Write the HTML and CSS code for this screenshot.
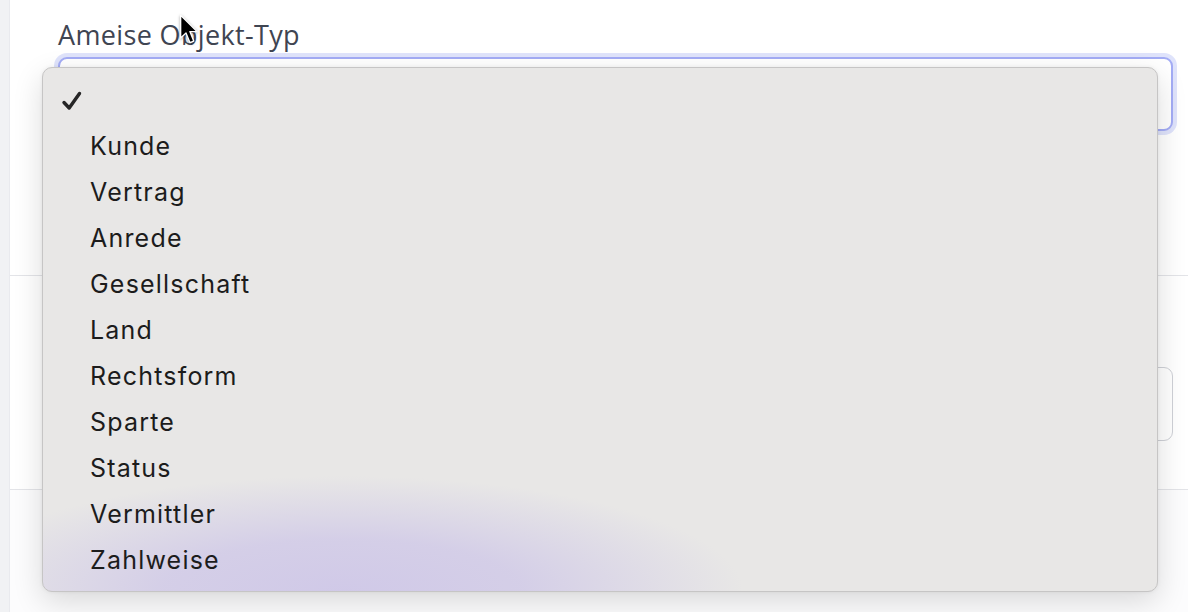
FILE: index.html
```html
<!DOCTYPE html>
<html lang="de">
<head>
<meta charset="utf-8">
<title>Ameise Objekt-Typ</title>
<link rel="stylesheet" href="styles.css">
</head>
<body>
<div class="page">
  <div class="rail"></div>
  <main class="panel">
    <section class="field">
      <label class="label">Ameise Objekt-Typ</label>
      <div class="select focused"></div>
    </section>
    <section class="row">
      <div class="select"></div>
    </section>
    <section class="row rest"></section>
  </main>

  <div class="menu">
    <ul class="options">
      <li class="opt selected">
        <svg class="check" width="24" height="22" viewBox="0 0 24 22">
          <path d="M4 12.5 L9.2 18 L19.5 3.5" fill="none" stroke="#262626" stroke-width="3.4" stroke-linecap="round" stroke-linejoin="round"/>
        </svg>
      </li>
      <li class="opt">Kunde</li>
      <li class="opt">Vertrag</li>
      <li class="opt">Anrede</li>
      <li class="opt">Gesellschaft</li>
      <li class="opt">Land</li>
      <li class="opt">Rechtsform</li>
      <li class="opt">Sparte</li>
      <li class="opt">Status</li>
      <li class="opt">Vermittler</li>
      <li class="opt">Zahlweise</li>
    </ul>
  </div>

  <svg class="cursor" width="22" height="32" viewBox="0 0 16 24">
    <path d="M1 1 L1 18 L5 14.2 L8 21.5 L10.8 20.3 L7.9 13.2 L13.3 13.2 Z" fill="#000" stroke="#fff" stroke-width="1" stroke-linejoin="round"/>
  </svg>
</div>
</body>
</html>
```
FILE: styles.css
```css
* { box-sizing: border-box; }
html, body { margin: 0; padding: 0; }
body {
  background: #f3f4f6;
  width: 1188px;
  height: 612px;
  overflow: hidden;
}
.page {
  position: relative;
  display: flex;
  height: 612px;
}
.rail {
  width: 9px;
  flex: none;
  background: #f1f2f4;
}
.panel {
  flex: 1;
  background: #fff;
  border-left: 1px solid #e9eaee;
  display: flex;
  flex-direction: column;
}
.field {
  padding: 19px 15px 0 48px;
  height: 276px;
  border-bottom: 1px solid #e3e4e8;
}
.label {
  display: block;
  font-family: "Open Sans", sans-serif;
  font-size: 27px;
  color: #3f4552;
  line-height: 32px;
  letter-spacing: 0.35px;
  margin-bottom: 6px;
}
.select {
  height: 74px;
  border: 1.5px solid #cfd1d7;
  border-radius: 9px;
  background: #fff;
}
.select.focused {
  border: 2px solid #a3acf5;
  box-shadow: 0 0 0 4px #dfe3fb;
}
.row {
  padding: 91px 15px 0 48px;
  height: 214px;
  border-bottom: 1px solid #e3e4e8;
}
.rest { flex: 1; border-bottom: none; background: #fcfcfd; }

.menu {
  position: absolute;
  left: 42px;
  top: 67px;
  width: 1116px;
  height: 525px;
  border: 1px solid #c6c5c5;
  border-radius: 10px;
  background:
    radial-gradient(ellipse 400px 115px at 300px 100%, rgba(204,196,232,0.85) 0%, rgba(204,196,232,0.7) 45%, rgba(204,196,232,0) 100%),
    #e8e7e6;
  box-shadow: 0 10px 30px rgba(0,0,0,0.14), 0 0 4px rgba(0,0,0,0.06);
  overflow: hidden;
}
.options {
  list-style: none;
  margin: 0;
  padding: 9px 0 0 0;
}
.opt {
  position: relative;
  height: 46px;
  line-height: 46px;
  padding-left: 47px;
  font-family: Inter, "Noto Sans", sans-serif;
  font-size: 25px;
  font-weight: 400;
  letter-spacing: 1.2px;
  color: #1c1c1c;
}
.check {
  position: absolute;
  left: 17px;
  top: 13px;
}
.cursor {
  position: absolute;
  left: 179px;
  top: 14px;
  filter: drop-shadow(0 1px 1.5px rgba(0,0,0,0.35));
}
```
